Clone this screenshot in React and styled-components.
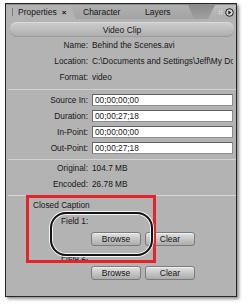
import React from "react";
import styled, { createGlobalStyle } from "styled-components";

const Global = createGlobalStyle`
  html, body { margin: 0; padding: 0; background: #fff; }
  body { font-family: "Liberation Sans", Arial, sans-serif; }
`;

const Stage = styled.div`
  position: relative;
  width: 246px;
  height: 305px;
  padding: 3px 0 0 5px;
  box-sizing: border-box;
`;

const Panel = styled.div`
  width: 232px;
  height: 294px;
  box-sizing: border-box;
  border: 1px solid #262626;
  background: #b3b3b3;
  box-shadow: 2px 2px 3px rgba(0, 0, 0, 0.45);
  display: flex;
  flex-direction: column;
  font-size: 8.3px;
  color: #161616;
  overflow: hidden;
`;

const TabBar = styled.div`
  display: flex;
  align-items: flex-end;
  height: 15px;
  background: linear-gradient(#8a8a8a, #a0a0a0);
`;

const Tab = styled.div`
  position: relative;
  z-index: ${(p) => p.$z};
  height: 14px;
  width: ${(p) => p.$w}px;
  margin-left: ${(p) => (p.$first ? 0 : -6)}px;
  padding-left: ${(p) => p.$pl}px;
  box-sizing: border-box;
  display: flex;
  align-items: center;
  font-size: 8.5px;
  color: #151515;
  background: ${(p) =>
    p.$active ? "#b3b3b3" : "linear-gradient(#b0b0b0, #a3a3a3)"};
  clip-path: polygon(0 0, calc(100% - 6px) 0, 100% 100%, 0 100%);
`;

const Grip = styled.span`
  width: 3px;
  height: 8px;
  margin-right: 4px;
  background-image: radial-gradient(circle, #7a7a7a 0.7px, transparent 0.9px);
  background-size: 3px 2px;
`;

const Close = styled.span`
  margin-left: 5px;
  font-size: 8px;
  font-weight: bold;
`;

const MenuArea = styled.div`
  margin-left: auto;
  width: 28px;
  height: 14px;
  display: flex;
  align-items: center;
  justify-content: flex-end;
  gap: 2px;
  padding-right: 2px;
  box-sizing: border-box;
  background: linear-gradient(#bdbdbd, #aeaeae);
  clip-path: polygon(7px 0, 100% 0, 100% 100%, 0 100%);
`;

const Dots = styled.span`
  width: 5px;
  height: 5px;
  background-image: radial-gradient(circle, #e6e6e6 0.7px, transparent 0.9px);
  background-size: 2.5px 2.5px;
`;

const Header = styled.div`
  margin: 3px 2px 0 4px;
  height: 15px;
  border-radius: 7px;
  background: linear-gradient(#cdcdcd, #bcbcbc 55%, #ababab);
  box-shadow: inset 0 -1px 0 #9c9c9c, inset 0 1px 0 #dadada;
  display: flex;
  align-items: center;
  justify-content: center;
  font-size: 8.5px;
`;

const InfoGrid = styled.div`
  display: grid;
  grid-template-columns: 82px 141px;
  column-gap: 4px;
  grid-auto-rows: 16px;
  align-items: center;
  padding-top: ${(p) => p.$pt || 0}px;
`;

const Label = styled.span`
  text-align: right;
  white-space: nowrap;
`;

const Value = styled.span`
  white-space: nowrap;
  overflow: hidden;
`;

const Field = styled.div`
  height: 12px;
  box-sizing: border-box;
  background: #fff;
  border: 1px solid #8c8c8c;
  border-top-color: #606060;
  border-left-color: #6a6a6a;
  padding-left: 2px;
  display: flex;
  align-items: center;
  white-space: nowrap;
`;

const Sep = styled.div`
  height: 1px;
  margin: ${(p) => p.$mt}px 0 0 2px;
  background: #d3d3d3;
`;

const Caption = styled.div`
  display: flex;
  flex-direction: column;
  margin-top: 1px;
  padding-left: 27px;
`;

const CapTitle = styled.div`
  height: 16px;
  display: flex;
  align-items: center;
`;

const FieldLabel = styled.div`
  height: 16px;
  display: flex;
  align-items: center;
  padding-left: 28px;
  margin-top: ${(p) => p.$mt || 0}px;
`;

const ButtonRow = styled.div`
  display: flex;
  gap: 4px;
  padding-left: 58px;
  margin-top: ${(p) => p.$mt || 0}px;
`;

const Button = styled.button`
  width: 50px;
  height: 14px;
  box-sizing: border-box;
  padding: 0;
  border: 1px solid #7b7b7b;
  border-radius: 3px;
  background: linear-gradient(#e2e2e2, #c6c6c6 50%, #acacac);
  box-shadow: inset 0 1px 0 #f0f0f0;
  font-family: inherit;
  font-size: 8.5px;
  color: #141414;
  display: flex;
  align-items: center;
  justify-content: center;
`;

const RedBox = styled.div`
  position: absolute;
  left: 26px;
  top: 195px;
  width: 130px;
  height: 68px;
  box-sizing: border-box;
  border: 3px solid #e3242b;
  pointer-events: none;
`;

const Ring = styled.div`
  position: absolute;
  left: 50px;
  top: 212px;
  width: 103px;
  height: 44px;
  box-sizing: border-box;
  border: 2px solid #141414;
  border-radius: 16px;
  box-shadow: 0 0 0 1px #f4f4f4, inset 0 0 0 1px #f4f4f4;
  pointer-events: none;
`;

const MenuIcon = () => (
  <svg width="9" height="9" viewBox="0 0 9 9">
    <circle cx="4.5" cy="4.5" r="3.8" fill="#d4d4d4" stroke="#1c1c1c" strokeWidth="1" />
    <path d="M3.4 2.6 L6.2 4.5 L3.4 6.4 Z" fill="#111" />
  </svg>
);

export default function App() {
  return (
    <>
      <Global />
      <Stage>
        <Panel>
          <TabBar>
            <Tab $active $first $z={3} $w={70} $pl={5}>
              <Grip />
              Properties
              <Close>×</Close>
            </Tab>
            <Tab $z={2} $w={69} $pl={13}>
              Character
            </Tab>
            <Tab $z={1} $w={61} $pl={12}>
              Layers
            </Tab>
            <MenuArea>
              <Dots />
              <MenuIcon />
            </MenuArea>
          </TabBar>
          <Header>Video Clip</Header>
          <InfoGrid>
            <Label>Name:</Label>
            <Value>Behind the Scenes.avi</Value>
            <Label>Location:</Label>
            <Value>C:\Documents and Settings\Jeff\My Documents</Value>
            <Label>Format:</Label>
            <Value>video</Value>
          </InfoGrid>
          <Sep $mt={4} />
          <InfoGrid $pt={2}>
            <Label>Source In:</Label>
            <Field>00;00;00;00</Field>
            <Label>Duration:</Label>
            <Field>00;00;27;18</Field>
            <Label>In-Point:</Label>
            <Field>00;00;00;00</Field>
            <Label>Out-Point:</Label>
            <Field>00;00;27;18</Field>
          </InfoGrid>
          <Sep $mt={3} />
          <InfoGrid>
            <Label>Original:</Label>
            <Value>104.7 MB</Value>
            <Label>Encoded:</Label>
            <Value>26.78 MB</Value>
          </InfoGrid>
          <Sep $mt={3} />
          <Caption>
            <CapTitle>Closed Caption</CapTitle>
            <FieldLabel>Field 1:</FieldLabel>
            <ButtonRow $mt={3}>
              <Button>Browse</Button>
              <Button>Clear</Button>
            </ButtonRow>
            <FieldLabel $mt={3}>Field 2:</FieldLabel>
            <ButtonRow $mt={1}>
              <Button>Browse</Button>
              <Button>Clear</Button>
            </ButtonRow>
          </Caption>
        </Panel>
        <RedBox />
        <Ring />
      </Stage>
    </>
  );
}
